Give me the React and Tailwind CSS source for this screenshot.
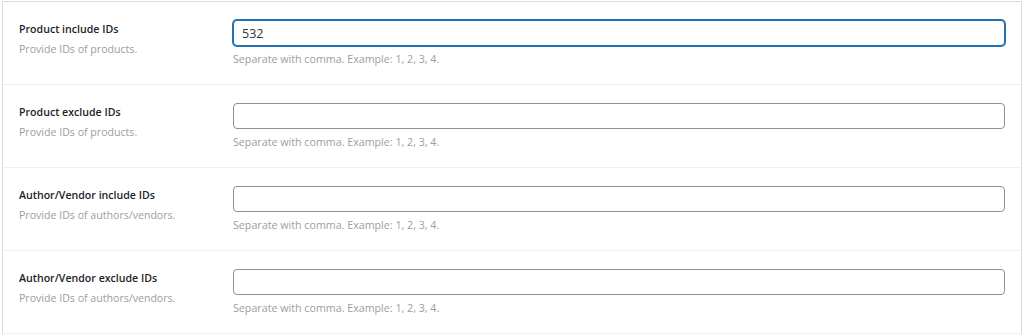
import React from "react";

const rows = [
  { label: "Product include IDs", desc: "Provide IDs of products.", value: "532", focused: true },
  { label: "Product exclude IDs", desc: "Provide IDs of products.", value: "" },
  { label: "Author/Vendor include IDs", desc: "Provide IDs of authors/vendors.", value: "" },
  { label: "Author/Vendor exclude IDs", desc: "Provide IDs of authors/vendors.", value: "" },
];

export default function App() {
  return (
    <div className="w-[1024px] h-[336px] bg-white pt-[1px] px-[2px] font-['Open_Sans',sans-serif]">
      <div className="border-l border-r border-t border-[#dcdcde]">
        {rows.map((r) => (
          <div key={r.label} className="flex h-[83px] border-b border-[#f0f0f1]">
            <div className="w-[230px] shrink-0 pl-4 pt-[19px]">
              <div className="text-[10.6px] leading-[16px] font-semibold text-[#1d2327]">{r.label}</div>
              <div className="mt-[5px] text-[10.6px] leading-[15px] text-[#9a9ea3]">{r.desc}</div>
            </div>
            <div className="flex-1 pr-4 pt-[18px]">
              <input
                readOnly
                value={r.value}
                className={`block w-full h-[26px] rounded-[4px] bg-white px-2 text-[12.5px] text-[#2c3338] outline-none ${
                  r.focused
                    ? "border border-[#2271b1] shadow-[0_0_0_1px_#2271b1]"
                    : "border border-[#8c8f94]"
                }`}
              />
              <div className="mt-[6px] text-[10.7px] leading-[15px] text-[#9a9ea3]">
                Separate with comma. Example: 1, 2, 3, 4.
              </div>
            </div>
          </div>
        ))}
      </div>
    </div>
  );
}
